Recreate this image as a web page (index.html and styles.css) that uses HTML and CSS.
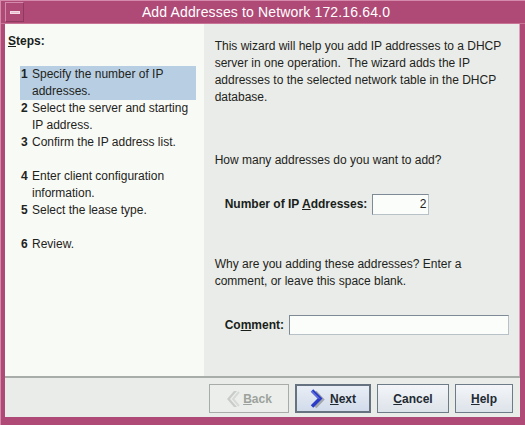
FILE: index.html
```html
<!DOCTYPE html>
<html>
<head>
<meta charset="utf-8">
<link rel="stylesheet" href="styles.css">
</head>
<body>
<div class="window">
  <div class="titlebar">
    <div class="menu-btn"><span class="dash"></span></div>
    <div class="title">Add Addresses to Network 172.16.64.0</div>
  </div>
  <div class="frame">
    <div class="main">
      <div class="steps">
        <div class="steps-head"><u>S</u>teps:</div>
        <ol class="step-list">
          <li class="step current"><span class="num">1</span><span class="txt">Specify the number of IP addresses.</span></li>
          <li class="step"><span class="num">2</span><span class="txt">Select the server and starting IP address.</span></li>
          <li class="step"><span class="num">3</span><span class="txt">Confirm the IP address list.</span></li>
          <li class="step gap"><span class="num">4</span><span class="txt">Enter client configuration information.</span></li>
          <li class="step"><span class="num">5</span><span class="txt">Select the lease type.</span></li>
          <li class="step gap"><span class="num">6</span><span class="txt">Review.</span></li>
        </ol>
      </div>
      <div class="content">
        <p class="intro">This wizard will help you add IP addresses to a DHCP server in one operation.&nbsp; The wizard adds the IP addresses to the selected network table in the DHCP database.</p>
        <p class="question">How many addresses do you want to add?</p>
        <div class="field">
          <label class="lbl">Number of IP <u>A</u>ddresses:</label>
          <div class="input num-input">2</div>
        </div>
        <p class="question2">Why are you adding these addresses? Enter a comment, or leave this space blank.</p>
        <div class="field field2">
          <label class="lbl">Co<u>m</u>ment:</label>
          <div class="input comment-input"></div>
        </div>
      </div>
    </div>
    <div class="footer">
      <div class="btn disabled back">
        <svg class="ico" width="14" height="18" viewBox="0 0 14 18"><path d="M11 1 L4 9 L11 17 L8 17 L1 9 L8 1 Z" fill="#c9cdc9"/><path d="M13 2 L7 9 L13 16" fill="none" stroke="#d6dad6" stroke-width="2"/></svg>
        <span><u>B</u>ack</span>
      </div>
      <div class="btn focus next">
        <svg class="ico" width="17" height="20" viewBox="0 0 17 20"><path d="M5 3 L12 10.5 L5 18" fill="none" stroke="#a3a8ac" stroke-width="4"/><path d="M2 1.5 L10 9.5 L2 17.5" fill="none" stroke="#2d3cc6" stroke-width="3.5"/><path d="M1.5 2 L9 9.5" fill="none" stroke="#8b97f2" stroke-width="1"/></svg>
        <span><u>N</u>ext</span>
      </div>
      <div class="btn cancel"><span><u>C</u>ancel</span></div>
      <div class="btn help"><span><u>H</u>elp</span></div>
    </div>
  </div>
</div>
</body>
</html>
```

FILE: styles.css
```css
* { box-sizing: border-box; }
html, body { margin: 0; padding: 0; }
body {
  width: 525px;
  height: 425px;
  overflow: hidden;
  font-family: "Liberation Sans", Arial, sans-serif;
  font-size: 12px;
  color: #1f2320;
}
.window {
  width: 525px;
  height: 425px;
  background: #af4a77;
  display: flex;
  flex-direction: column;
  border-top: 1px solid #d58aab;
  border-left: 1px solid #d58aab;
}
.titlebar {
  height: 23px;
  display: flex;
  align-items: center;
  padding: 0 7px 0 4px;
  border-bottom: 1px solid #c77496;
}
.menu-btn {
  width: 19px;
  height: 20px;
  border: 1px solid #d48aaa;
  border-right-color: #8d3a5e;
  border-bottom-color: #8d3a5e;
  display: flex;
  align-items: center;
  justify-content: center;
}
.dash {
  width: 10px;
  height: 3px;
  background: #e7b9cd;
  border: 1px solid #f4dbe6;
}
.title {
  flex: 1;
  text-align: center;
  color: #ffffff;
  font-family: "Liberation Sans", Arial, sans-serif;
  font-size: 14px;
  letter-spacing: 0.15px;
  padding-right: 10px;
}
.frame {
  flex: 1;
  margin: 0 5px 8px 4px;
  display: flex;
  flex-direction: column;
  background: #e9ece8;
}
.main {
  display: flex;
  height: 352px;
}
.steps {
  width: 199px;
  background: #f8faf6;
  padding: 9px 0 0 3px;
}
.steps-head {
  font-weight: bold;
  line-height: 17px;
  color: #1a1e1b;
}
.step-list {
  list-style: none;
  margin: 16px 0 0 12px;
  padding: 0;
  width: 176px;
}
.step {
  display: flex;
  line-height: 17px;
}
.step.gap { margin-top: 17px; }
.step.current { background: #b8cfe3; }
.num {
  width: 12px;
  flex: none;
  font-weight: bold;
  padding-left: 1px;
}
.txt { flex: 1; }
.current .txt { padding-right: 10px; }
.content {
  flex: 1;
  padding: 14px 10px 0 11px;
  border-right: 1px solid #d9a3bd;
}
.content p {
  margin: 0;
  line-height: 17px;
}
.question { margin-top: 46px !important; }
.field {
  display: flex;
  align-items: center;
  margin: 24px 0 0 10px;
  height: 22px;
}
.lbl {
  font-weight: bold;
  color: #1a1e1b;
  margin-right: 5px;
}
.input {
  height: 21px;
  background: #fbfdfb;
  border: 1px solid #7e8a96;
  border-right-color: #b8c0c8;
  border-bottom-color: #b8c0c8;
}
.num-input {
  width: 57px;
  text-align: right;
  padding-right: 2px;
  line-height: 19px;
}
.question2 { margin-top: 41px !important; }
.field2 { margin-top: 24px; }
.comment-input { width: 220px; height: 20px; }
.footer {
  flex: 1;
  border-top: 2px solid #a9ada9;
  display: flex;
  justify-content: flex-end;
  align-items: flex-start;
  padding: 6px 7px 0 0;
  gap: 6px;
}
.btn {
  height: 29px;
  border: 1px solid #6d7a88;
  background: linear-gradient(#f3f5f8, #dde3ea);
  display: flex;
  align-items: center;
  justify-content: center;
  font-weight: bold;
  color: #222a33;
}
.back { width: 80px; border-color: #a8aca8; background: #eceeeb; color: #9ca29c; }
.next { width: 76px; border: 2px solid #66727f; background: linear-gradient(#e9eef6, #d1dbea); }
.cancel { width: 72px; }
.help { width: 58px; }
.ico { margin-right: 3px; }
```
